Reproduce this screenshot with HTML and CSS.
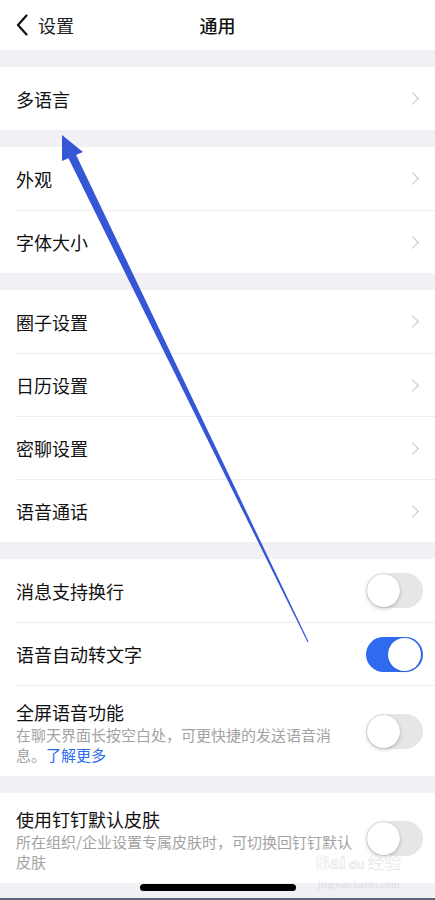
FILE: index.html
```html
<!DOCTYPE html>
<html lang="zh-CN">
<head>
<meta charset="utf-8">
<link rel="stylesheet" href="styles.css">
</head>
<body>
<div class="page">
  <header class="nav">
    <div class="back">
      <svg class="back-icon" width="12" height="22" viewBox="0 0 12 22"><path d="M10.5 1.5 L2 11 L10.5 20.5" fill="none" stroke="#111" stroke-width="2.2" stroke-linecap="round" stroke-linejoin="round"/></svg>
      <span>设置</span>
    </div>
    <div class="title">通用</div>
  </header>

  <div class="gap"></div>
  <section class="group">
    <div class="row"><span class="label">多语言</span><i class="chev"></i></div>
  </section>

  <div class="gap"></div>
  <section class="group">
    <div class="row"><span class="label">外观</span><i class="chev"></i></div>
    <div class="row"><span class="label">字体大小</span><i class="chev"></i></div>
  </section>

  <div class="gap"></div>
  <section class="group">
    <div class="row"><span class="label">圈子设置</span><i class="chev"></i></div>
    <div class="row"><span class="label">日历设置</span><i class="chev"></i></div>
    <div class="row"><span class="label">密聊设置</span><i class="chev"></i></div>
    <div class="row"><span class="label">语音通话</span><i class="chev"></i></div>
  </section>

  <div class="gap"></div>
  <section class="group">
    <div class="row"><span class="label">消息支持换行</span><span class="toggle"></span></div>
    <div class="row"><span class="label">语音自动转文字</span><span class="toggle on"></span></div>
    <div class="row tall">
      <div class="text">
        <div class="label">全屏语音功能</div>
        <div class="sub">在聊天界面长按空白处，可更快捷的发送语音消息。<span class="link">了解更多</span></div>
      </div>
      <span class="toggle"></span>
    </div>
  </section>

  <div class="gap"></div>
  <section class="group">
    <div class="row tall last">
      <div class="text">
        <div class="label">使用钉钉默认皮肤</div>
        <div class="sub">所在组织/企业设置专属皮肤时，可切换回钉钉默认皮肤</div>
      </div>
      <span class="toggle"></span>
    </div>
  </section>

  <footer class="bottom">
    <div class="home"></div>
  </footer>

  <div class="watermark">
    <div class="wm-logo">Bai<span class="wm-du">du</span><span class="wm-cn">经验</span></div>
    <div class="wm-url">jingyan.baidu.com</div>
  </div>

  <svg class="arrow" width="435" height="900" viewBox="0 0 435 900">
    <polygon points="75.8,154.2 68.2,157.8 307.6,642.2 308.6,641.8" fill="#3557d6"/>
    <polygon points="62,135 83,152 62,161" fill="#3557d6"/>
  </svg>
</div>
</body>
</html>
```

FILE: styles.css
```css
* { box-sizing: border-box; }
html, body { margin: 0; padding: 0; }
body {
  font-family: "Noto Sans CJK SC", "Noto Sans", sans-serif;
  background: #ffffff;
  color: #111111;
}
.page {
  position: relative;
  width: 435px;
  height: 900px;
  overflow: hidden;
  background: #f0f0f5;
  display: flex;
  flex-direction: column;
}
.nav {
  position: relative;
  height: 50px;
  background: #fff;
  display: flex;
  align-items: center;
  padding-left: 16px;
}
.back {
  display: flex;
  align-items: center;
  gap: 10px;
  font-size: 18px;
  color: #222;
}
.back-icon { display: block; }
.title {
  position: absolute;
  left: 0;
  right: 0;
  text-align: center;
  font-size: 18px;
  font-weight: 500;
  pointer-events: none;
}
.gap { height: 17px; flex: none; }
.group {
  background: #fff;
  padding-left: 16px;
}
.row {
  height: 63px;
  display: flex;
  align-items: center;
  justify-content: space-between;
  padding-right: 12px;
  border-top: 1px solid #eeeef0;
}
.row:first-child { border-top: none; }
.label {
  font-size: 18px;
  line-height: 26px;
  color: #111;
}
.chev {
  width: 9px;
  height: 9px;
  border-top: 1.3px solid #c2c2c6;
  border-right: 1.3px solid #c2c2c6;
  transform: rotate(45deg);
  margin-right: 6px;
}
.toggle {
  position: relative;
  flex: none;
  width: 57px;
  height: 35px;
  border-radius: 18px;
  background: #e6e6e9;
}
.toggle::after {
  content: "";
  position: absolute;
  left: 1px;
  top: 1px;
  width: 33px;
  height: 33px;
  border-radius: 50%;
  background: #fff;
  box-shadow: 0 2px 4px rgba(0,0,0,0.18), 0 0 1px rgba(0,0,0,0.2);
}
.toggle.on { background: #2f6bf0; }
.toggle.on::after { left: 22px; box-shadow: 0 1px 2px rgba(0,0,0,0.15); }
.row.tall {
  height: 91px;
  align-items: center;
}
.row.last { height: 90px; }
.text {
  width: 340px;
  flex: none;
  padding-top: 1px;
}
.sub {
  font-size: 15px;
  line-height: 20px;
  color: #a3a3a3;
  line-break: strict;
}
.link { color: #2f6bf0; }
.bottom {
  flex: 1;
  display: flex;
  justify-content: center;
  padding-top: 1px;
  border-bottom: 2px solid #5a6478;
}
.home {
  width: 156px;
  height: 7px;
  border-radius: 4px;
  background: #000;
}
.watermark {
  position: absolute;
  left: 316px;
  top: 852px;
  text-align: center;
}
.wm-logo {
  font-family: "Liberation Sans", sans-serif;
  font-size: 19px;
  font-weight: 700;
  line-height: 20px;
  -webkit-text-stroke: 0.7px rgba(200,200,205,0.5);
  color: rgba(255,255,255,0.4);
}
.wm-du {
  font-size: 13px;
  margin: 0 3px;
}
.wm-cn {
  font-family: "Noto Sans CJK SC", sans-serif;
  font-size: 17px;
  font-weight: 400;
  color: rgba(225,225,228,0.7);
  -webkit-text-stroke: 0;
}
.wm-url {
  font-family: "Liberation Serif", serif;
  font-size: 11px;
  line-height: 14px;
  margin-top: 2px;
  color: rgba(200,200,205,0.5);
}
.arrow {
  position: absolute;
  left: 0;
  top: 0;
  pointer-events: none;
}
```
